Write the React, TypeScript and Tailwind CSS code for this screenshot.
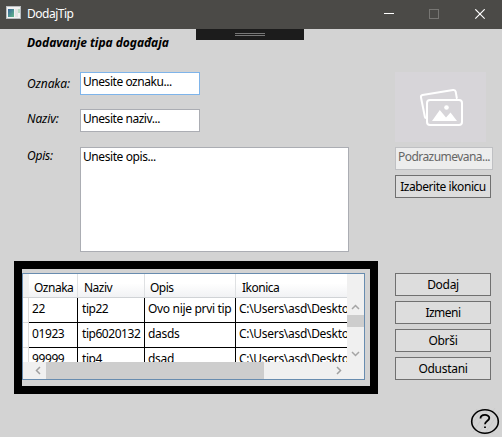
import React from "react";

function TitleBar() {
  return (
    <header className="flex h-[29px] items-center bg-[#4b4a47] pl-[6px] text-white">
      <svg className="mb-[4px] shrink-0" width="15" height="13" viewBox="0 0 15 13">
        <defs>
          <linearGradient id="pane" x1="0" y1="0" x2="1" y2="1">
            <stop offset="0" stopColor="#37649c" />
            <stop offset="1" stopColor="#62b98a" />
          </linearGradient>
        </defs>
        <rect width="15" height="13" fill="#b9bdc0" />
        <rect x="1" y="1" width="13" height="11" fill="#f2f2f2" />
        <rect x="2" y="3" width="6" height="8" fill="url(#pane)" />
        <rect x="9" y="3" width="3" height="8" fill="#e2e4e4" />
        <rect x="12" y="3" width="2" height="4" fill="#b9dcc5" />
      </svg>
      <span className="mb-[2px] ml-[6px] flex-1 text-[12px] leading-[16px] tracking-[-0.5px]">DodajTip</span>
      <svg className="mr-[17px] shrink-0" width="101" height="11" viewBox="0 0 101 11" fill="none">
        <path d="M0 4.500h10" stroke="#fff" />
        <rect x="45.500" y="-.500" width="9" height="9" stroke="#777673" className="translate-y-px" />
        <path d="M91.300.3l9.400 9.400M100.700.3l-9.400 9.400" stroke="#fff" strokeWidth="1.200" />
      </svg>
    </header>
  );
}

function Button({ children, text = "tracking-[-0.3px]" }: { children: React.ReactNode; text?: string }) {
  return (
    <button className="flex h-[23px] w-[96px] items-center justify-center border border-[#707070] bg-[#ddd] pt-px leading-[16px] whitespace-nowrap">
      <span className={text}>{children}</span>
    </button>
  );
}

const rows = [
  ["22", "tip22", "Ovo nije prvi tip"],
  ["01923", "tip6020132", "dasds"],
  ["99999", "tip4", "dsad"],
];

const columns = "grid grid-cols-[49px_67px_91px_111px]";

function DataGrid() {
  return (
    <section className="h-[133px] w-[364px] border-8 border-black pt-[4px]">
      <div className="h-[107px] w-[343px] border border-[#688caf] bg-[#f0f0f0]">
        <div className="flex h-[88px]">
          <div className="w-[6px] shrink-0 overflow-hidden bg-white">
            <div className="h-[24px] border-b border-[#d5d5d5] bg-[#f0f0f0]" />
            <div className="h-[25px] border-r border-b border-[#dcdcdc]" />
            <div className="h-[25px] border-r border-b border-[#dcdcdc]" />
            <div className="h-[25px] border-r border-[#dcdcdc]" />
          </div>
          <div className="w-[318px] overflow-hidden bg-white">
            <div className={columns + " h-[24px] border-b border-[#d0d3d6] bg-linear-to-b from-white from-40% to-[#f1f2f4] leading-[16px] tracking-[-0.5px]"}>
              <span className="border-r border-[#dfe1e3] pt-[6px] pl-[5px]">Oznaka</span>
              <span className="border-r border-[#dfe1e3] pt-[6px] pl-[6px]">Naziv</span>
              <span className="border-r border-[#dfe1e3] pt-[6px] pl-[5px]">Opis</span>
              <span className="pt-[6px] pl-[6px]">Ikonica</span>
            </div>
            {rows.map(([id, name, about]) => (
              <div key={id} className={columns + " h-[25px] border-b border-black leading-[16px] whitespace-nowrap"}>
                <span className="border-r border-black pt-[3px] pl-[3px] tracking-[-0.4px]">{id}</span>
                <span className="border-r border-black pt-[3px] pl-[4px] tracking-[-0.45px]">{name}</span>
                <span className="border-r border-black pt-[3px] pl-[3px] tracking-[-0.32px]">{about}</span>
                <span className="overflow-hidden pt-[3px] pl-[3px] tracking-[-0.3px]">C:\Users\asd\Deskto</span>
              </div>
            ))}
          </div>
          <div className="flex w-[17px] flex-col items-center pt-[30px]">
            <svg width="9" height="6" viewBox="0 0 9 6" fill="none" stroke="#a5a5a5" strokeWidth="1.500">
              <path d="M1 5l3.500-3.500L8 5" />
            </svg>
            <div className="mt-[5px] h-[12px] w-[17px] bg-[#cdcdcd]" />
            <svg className="mt-[24px]" width="9" height="6" viewBox="0 0 9 6" fill="none" stroke="#a5a5a5" strokeWidth="1.500">
              <path d="M1 1l3.500 3.500L8 1" />
            </svg>
          </div>
        </div>
        <div className="flex h-[17px] items-center">
          <svg className="ml-[12px]" width="6" height="9" viewBox="0 0 6 9" fill="none" stroke="#a0a0a0" strokeWidth="1.500">
            <path d="M5 1L1.500 4.500L5 8" />
          </svg>
          <div className="ml-[5px] h-[17px] w-[218px] bg-[#cdcdcd]" />
          <svg className="ml-[72px]" width="6" height="9" viewBox="0 0 6 9" fill="none" stroke="#a0a0a0" strokeWidth="1.500">
            <path d="M1 1L4.500 4.500L1 8" />
          </svg>
        </div>
      </div>
    </section>
  );
}

export default function App() {
  return (
    <div className="flex h-[437px] w-[502px] flex-col overflow-hidden bg-[#d3d3d3] font-['Noto_Sans','Open_Sans',sans-serif] text-[12px] text-black">
      <TitleBar />
      <div className="flex h-[43px] shrink-0">
        <h1 className="w-[196px] pt-[6px] pl-[27px] leading-[16px] font-bold whitespace-nowrap italic tracking-[-0.03px]">
          Dodavanje tipa događaja
        </h1>
        <div className="flex h-[11px] w-[108px] flex-col items-center gap-px bg-[#1c1c1c] pt-[4px]">
          <div className="h-px w-[30px] bg-[#777]" />
          <div className="h-px w-[30px] bg-[#777]" />
        </div>
      </div>
      <div className="flex h-[189px] shrink-0">
        <form className="w-[395px] pl-[27px] leading-[16px]">
          <div className="flex h-[37px]">
            <label className="w-[53px] pt-[4px] italic tracking-[-0.1px]">Oznaka:</label>
            <div className="h-[23px] w-[120px] border border-[#7eb4ea] bg-white pt-px pl-[2px] tracking-[-0.45px]">Unesite oznaku...</div>
          </div>
          <div className="flex h-[38px]">
            <label className="w-[53px] pt-[2px] italic tracking-[-0.1px]">Naziv:</label>
            <div className="h-[23px] w-[120px] border border-[#abadb3] bg-white pt-px pl-[2px] tracking-[-0.45px]">Unesite naziv...</div>
          </div>
          <div className="flex">
            <label className="w-[53px] pt-px italic tracking-[-0.2px]">Opis:</label>
            <div className="h-[105px] w-[269px] border border-[#abadb3] bg-white pt-px pl-[2px] tracking-[-0.42px]">Unesite opis...</div>
          </div>
        </form>
        <aside className="flex flex-col gap-[5px]">
          <div className="h-[70px] w-[91px] bg-[#d7d5d9]">
            <svg width="91" height="70" viewBox="0 0 91 70" fill="none" stroke="#fff" strokeWidth="2" strokeLinejoin="round" strokeLinecap="round">
              <path d="M31 46q-1 0-1.200-1.500L26 25.500q-.4-2 1.500-2.400L58 18q2.300-.4 2.700 1.800L61.800 26" />
              <rect x="32" y="28" width="35" height="25" rx="3" />
              <circle cx="51.500" cy="35.500" r="2.300" fill="#fff" stroke="none" />
              <path d="M37 49l7.800-11 6.200 7.500 4.500-5 6.500 8.500z" fill="#fff" stroke="none" />
            </svg>
          </div>
          <div className="h-[23px] w-[98px] border border-[#bfc0c3] bg-[#ededed] pt-px pl-[2px] leading-[16px] whitespace-nowrap text-[#666] tracking-[-0.55px]">
            Podrazumevana...
          </div>
          <Button text="tracking-[-0.45px]">Izaberite ikonicu</Button>
        </aside>
      </div>
      <div className="flex flex-1">
        <div className="w-[395px] pl-[14px]">
          <DataGrid />
        </div>
        <div className="w-[107px] pt-[12px]">
          <div className="flex flex-col gap-[5px]">
            <Button>Dodaj</Button>
            <Button text="tracking-[-0.5px]">Izmeni</Button>
            <Button>Obrši</Button>
            <Button>Odustani</Button>
          </div>
          <svg className="mt-[28px] ml-[75px]" width="30" height="27" viewBox="0 0 30 27" fill="none">
            <path d="M3 7l4-6M1 18L13 0M3 24L19 0M8 26L25 0M14 27L29 4M22 26l7-10" stroke="#cacaca" />
            <ellipse cx="15" cy="13.500" rx="13.300" ry="11.700" stroke="#000" strokeWidth="1.600" />
            <path d="M10.500 10.500C10.500 5.800 19.300 5.800 19.300 10c0 3-4.300 3-4.300 6.200" stroke="#000" strokeWidth="1.800" />
            <path d="M15 18.500v1.500" stroke="#000" strokeWidth="1.800" />
          </svg>
        </div>
      </div>
    </div>
  );
}
